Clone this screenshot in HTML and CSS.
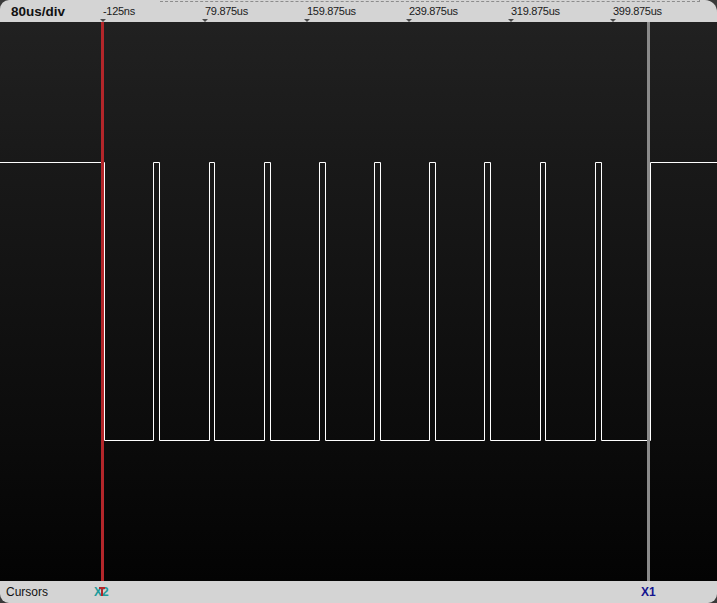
FILE: index.html
```html
<!DOCTYPE html>
<html lang="en">
  <head>
    <meta charset="UTF-8">
    <title>Waveform</title>
    <link rel="stylesheet" href="styles.css">
  </head>
  <body>
    <div class="scope">
      <!-- ruler -->
      <div class="ruler">
        <span class="scale">80us/div</span>
        <div class="view-box"></div>
        <span class="tick" style="left:103px">-125ns</span>
        <span class="tick" style="left:205px">79.875us</span>
        <span class="tick" style="left:307px">159.875us</span>
        <span class="tick" style="left:409px">239.875us</span>
        <span class="tick" style="left:511px">319.875us</span>
        <span class="tick" style="left:613px">399.875us</span>
      </div>

      <!-- plot -->
      <div class="plot">
        <svg class="trace" width="717" height="559" viewBox="0 0 717 559">
          <path d="M0 140.5 H104.5 V418.5 H153.5 V140.5 H159.5 V418.5 H209.5 V140.5 H214.5 V418.5 H264.5 V140.5 H270.5 V418.5 H319.5 V140.5 H325.5 V418.5 H374.5 V140.5 H380.5 V418.5 H429.5 V140.5 H435.5 V418.5 H484.5 V140.5 H490.5 V418.5 H540.5 V140.5 H545.5 V418.5 H595.5 V140.5 H601.5 V418.5 H650.5 V140.5 H717" fill="none" stroke="#ffffff" stroke-width="1"/>
          <rect x="101" y="0" width="3" height="559" fill="#b3262a"/>
          <rect x="647" y="0" width="3" height="559" fill="#8a8a8a"/>
        </svg>
      </div>

      <!-- cursor bar -->
      <div class="cursors">
        <span class="cursors-title">Cursors</span>
        <span class="marker x2" style="left:94px">X2</span>
        <span class="marker-line" style="left:101px"></span>
        <span class="marker x1" style="left:641px">X1</span>
      </div>
    </div>
  </body>
</html>
```

FILE: styles.css
```css
body {
  margin: 0;
  background: #3a3a3a;
  font-family: "Liberation Sans", Arial, sans-serif;
}

.scope {
  width: 717px;
  height: 603px;
  display: flex;
  flex-direction: column;
  overflow: hidden;
}

.ruler {
  position: relative;
  height: 22px;
  flex: none;
  background: #d4d4d4;
  border-radius: 9px 12px 0 0;
}

.scale {
  position: absolute;
  left: 11px;
  top: 4px;
  font-size: 13.5px;
  font-weight: bold;
  color: #111;
}

.view-box {
  position: absolute;
  left: 160px;
  top: -1px;
  width: 539px;
  height: 2px;
  border-bottom: 1px dashed #8c8c8c;
  border-right: 1px dashed #8c8c8c;
}

.tick {
  position: absolute;
  top: 5px;
  font-size: 11px;
  color: #1a1a1a;
  letter-spacing: -0.3px;
}

/* little down arrow under each label */
.tick::after {
  content: "";
  position: absolute;
  left: -3px;
  top: 14px;
  border-left: 3px solid transparent;
  border-right: 3px solid transparent;
  border-top: 3px solid #4a4a4a;
}

.plot {
  flex: 1;
  position: relative;
  background: linear-gradient(#212121, #191919 25%, #0b0b0b 75%, #030303);
}

.trace {
  display: block;
}

.cursors {
  position: relative;
  height: 22px;
  flex: none;
  background: #d4d4d4;
  border-radius: 0 0 9px 9px;
}

.cursors-title {
  position: absolute;
  left: 6px;
  top: 4px;
  font-size: 12px;
  color: #111;
}

.marker {
  position: absolute;
  top: 4px;
  font-size: 12px;
  font-weight: bold;
}

.x2 {
  color: #1f9b9b;
}

.x1 {
  color: #15158f;
}

.marker-line {
  position: absolute;
  top: 6px;
  width: 2px;
  height: 9px;
  background: #b3262a;
}

.marker-line::before {
  content: "";
  position: absolute;
  left: -2px;
  top: 0;
  width: 6px;
  height: 2px;
  background: #b3262a;
}
```
